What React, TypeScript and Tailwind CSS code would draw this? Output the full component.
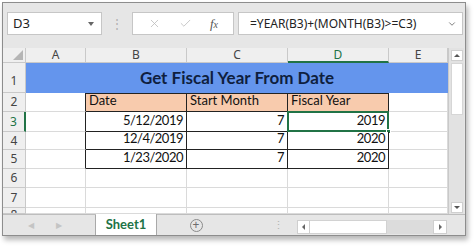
import { X, Check, ChevronDown } from "lucide-react";

const cols = ["A", "B", "C", "D", "E"];

const rows = [
  { n: 1, date: "", start: "", fy: "" },
  { n: 2, date: "Date", start: "Start Month", fy: "Fiscal Year" },
  { n: 3, date: "5/12/2019", start: "7", fy: "2019" },
  { n: 4, date: "12/4/2019", start: "7", fy: "2020" },
  { n: 5, date: "1/23/2020", start: "7", fy: "2020" },
  { n: 6 },
  { n: 7 },
  { n: 8 },
];

const cell = "border-r border-b border-[#dadada] bg-white";
const hdr = "bg-[#efefef] border-r border-b border-[#c9c9c9] text-[12px] text-[#444] flex items-center justify-center";
const txt = "text-[13px] text-[#111] font-['Lato','Liberation_Sans',sans-serif]";

function RowHeader({ n, active }: { n: number; active?: boolean }) {
  return (
    <div
      className={`${hdr} ${
        active ? "bg-[#d2d2d2] border-r-2 border-r-[#217346] text-[#217346]" : ""
      } ${n === 1 ? "items-end pb-[2px]" : ""} overflow-hidden`}
    >
      {n === 8 ? <span className="mt-[8px]">8</span> : n}
    </div>
  );
}

export default function App() {
  return (
    <div className="w-[474px] h-[246px] bg-white font-['Noto_Sans','Liberation_Sans',sans-serif]">
      <div className="ml-[2px] mt-[2px] w-[464px] h-[234px] border border-[#8d8d8d] bg-[#e6e6e6] shadow-[2px_4px_5px_rgba(0,0,0,0.28)] flex flex-col overflow-hidden">
        {/* formula bar */}
        <div className="h-[45px] flex items-start pt-[9px] pl-[4px] shrink-0">
          <div className="w-[95px] h-[23px] bg-white border border-[#c6c6c6] flex items-center justify-between pl-[5px] pr-[7px]">
            <span className="text-[13px] text-[#222]">D3</span>
            <span className="w-0 h-0 border-l-[3.5px] border-r-[3.5px] border-t-[4px] border-l-transparent border-r-transparent border-t-[#666]" />
          </div>
          <div className="w-[30px] h-[23px] flex items-center justify-center text-[#b0b0b0] text-[12px]">⋮</div>
          <div className="w-[102px] h-[23px] bg-white border border-[#c6c6c6] flex items-center justify-around px-[6px]">
            <X size={13} strokeWidth={1.5} className="text-[#bdbdbd]" />
            <Check size={13} strokeWidth={1.5} className="text-[#bdbdbd]" />
            <span className="font-['Liberation_Serif',serif] italic text-[13px] text-[#555] leading-none">
              f<span className="text-[10px]">x</span>
            </span>
          </div>
          <div className="ml-[4px] w-[225px] h-[23px] bg-white border border-[#c6c6c6] flex items-center justify-between pl-[11px] pr-[5px]">
            <span className="text-[12px] text-[#222]">=YEAR(B3)+(MONTH(B3)&gt;=C3)</span>
            <ChevronDown size={10} strokeWidth={2} className="text-[#666]" />
          </div>
        </div>

        {/* sheet */}
        <div className="flex h-[166px] shrink-0">
          <div className="grid grid-cols-[23px_60px_101px_101px_101px_59px] grid-rows-[15px_30px_19px_20px_18px_19px_19px_20px_6px]">
            {/* header row */}
            <div className={`${hdr} justify-end items-end pr-[2px] pb-[2px]`}>
              <svg width="10" height="10" viewBox="0 0 10 10">
                <polygon points="10,0 10,10 0,10" fill="#b5b5b5" />
              </svg>
            </div>
            {cols.map((c) => (
              <div
                key={c}
                className={`${hdr} ${c === "D" ? "bg-[#d2d2d2] border-b-2 border-b-[#217346] text-[#217346]" : ""}`}
              >
                {c}
              </div>
            ))}

            {rows.map((r) => {
              if (r.n === 1) {
                return [
                  <RowHeader key="h1" n={1} />,
                  <div
                    key="t"
                    className="col-span-5 bg-[#6495ed] flex items-center justify-center"
                  >
                    <span className="text-[17px] font-bold text-[#0f1f3f] font-['Lato','Liberation_Sans',sans-serif]">
                      Get Fiscal Year From Date
                    </span>
                  </div>,
                ];
              }
              const inTable = r.n >= 2 && r.n <= 5;
              const head = r.n === 2;
              const tb = `border-r border-b border-r-[#222] border-b-[#222] ${
                head ? "bg-[#f8cbad] border-t border-t-[#222]" : "bg-white tracking-[-0.5px]"
              } ${txt} flex items-end pb-[1px] px-[3px]`;
              return [
                <RowHeader key={`h${r.n}`} n={r.n} active={r.n === 3} />,
                <div key={`a${r.n}`} className={`${cell} ${inTable ? "border-r-[#222]" : ""}`} />,
                inTable ? (
                  <div key={`b${r.n}`} className={`${tb} ${head ? "justify-start" : "justify-end"}`}>
                    {r.date}
                  </div>
                ) : (
                  <div key={`b${r.n}`} className={cell} />
                ),
                inTable ? (
                  <div key={`c${r.n}`} className={`${tb} ${head ? "justify-start" : "justify-end"}`}>
                    {r.start}
                  </div>
                ) : (
                  <div key={`c${r.n}`} className={cell} />
                ),
                inTable ? (
                  <div key={`d${r.n}`} className={`${tb} ${head ? "justify-start" : "justify-end"} relative`}>
                    {r.fy}
                    {r.n === 3 && (
                      <>
                        <span className="absolute -left-[1px] -top-[1px] -right-[1px] -bottom-[1px] border-2 border-[#217346]" />
                        <span className="absolute -right-[3px] -bottom-[3px] w-[5px] h-[5px] bg-[#217346] border border-white" />
                      </>
                    )}
                  </div>
                ) : (
                  <div key={`d${r.n}`} className={cell} />
                ),
                <div key={`e${r.n}`} className={cell} />,
              ];
            })}
          </div>

          {/* vertical scrollbar */}
          <div className="w-[16px] bg-[#e2e2e2] border-l border-[#c9c9c9] flex flex-col items-center pt-[2px]">
            <div className="w-[12px] h-[11px] bg-white border border-[#cfcfcf] flex items-center justify-center">
              <span className="w-0 h-0 border-l-[3px] border-r-[3px] border-b-[3px] border-l-transparent border-r-transparent border-b-[#555]" />
            </div>
            <div className="mt-[2px] w-[12px] h-[52px] bg-white border border-[#d6d6d6]" />
            <div className="flex-1" />
            <div className="mb-[1px] w-[12px] h-[11px] bg-white border border-[#cfcfcf] flex items-center justify-center">
              <span className="w-0 h-0 border-l-[3px] border-r-[3px] border-t-[3px] border-l-transparent border-r-transparent border-t-[#555]" />
            </div>
          </div>
        </div>

        {/* tab bar */}
        <div className="flex h-[22px] border-t border-[#bdbdbd] bg-[#e6e6e6]">
          <div className="w-[93px] border-r border-[#a9a9a9] flex items-center pl-[25px] gap-[22px] text-[#c4c4c4] text-[8px]">
            <span>◀</span>
            <span>▶</span>
          </div>
          <div className="-mt-[1px] w-[61px] bg-white border-r border-[#a9a9a9] flex items-center justify-center">
            <span className="text-[13px] font-bold text-[#217346] font-['Lato','Liberation_Sans',sans-serif]">Sheet1</span>
          </div>
          <div className="w-[78px] flex items-center justify-center">
            <div className="w-[13px] h-[13px] rounded-full border border-[#8a8a8a] flex items-center justify-center text-[#6d6d6d] text-[12px] leading-none">
              +
            </div>
          </div>
          <div className="w-[62px] flex items-center justify-end pr-[13px] text-[#b4b4b4] text-[11px]">⋮</div>
          <div className="mt-[5px] h-[14px] w-[150px] flex bg-[#dcdcdc]">
            <div className="w-[13px] h-full bg-white border border-[#cfcfcf] flex items-center justify-center">
              <span className="w-0 h-0 border-t-[3px] border-b-[3px] border-r-[3px] border-t-transparent border-b-transparent border-r-[#666]" />
            </div>
            <div className="w-[77px] h-full bg-white border-y border-r border-[#d2d2d2]" />
            <div className="flex-1" />
            <div className="w-[14px] h-full bg-white border border-[#cfcfcf] flex items-center justify-center">
              <span className="w-0 h-0 border-t-[3px] border-b-[3px] border-l-[3px] border-t-transparent border-b-transparent border-l-[#666]" />
            </div>
          </div>
        </div>
      </div>
    </div>
  );
}
